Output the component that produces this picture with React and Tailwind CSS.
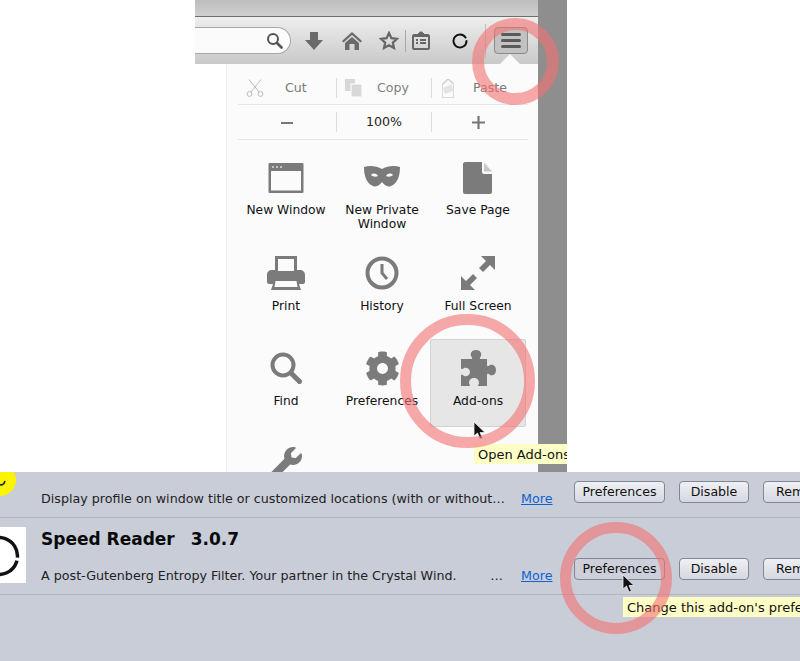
import React from "react";
import { FaCog, FaWrench } from "react-icons/fa";

const G = "#7b7b7b";

const IconWindow = () => (
  <svg width="36" height="32" viewBox="0 0 36 32"><rect x="0.5" y="1" width="35" height="30" rx="1" fill={G} /><rect x="3" y="9" width="30" height="19.5" fill="#fbfbfb" /><circle cx="5" cy="5" r="1" fill="#ddd" /><circle cx="9" cy="5" r="1" fill="#ddd" /><circle cx="13" cy="5" r="1" fill="#ddd" /></svg>
);
const IconMask = () => (
  <svg width="36" height="32" viewBox="0 0 36 32"><path fillRule="evenodd" fill={G} d="M0 5C6 3 13 4 18 7C23 4 30 3 36 5C36 13 34 21 27 24C23 26 20 22 18 20C16 22 13 26 9 24C2 21 0 13 0 5ZM7 13C9 15 12 15 14 14C12 11 9 11 7 13ZM22 14C24 15 27 15 29 13C27 11 24 11 22 14Z" /></svg>
);
const IconPage = () => (
  <svg width="30" height="34" viewBox="0 0 30 34"><path fill={G} d="M2 1H19V11C19 12 20 13 21 13H29V31C29 32 28 33 27 33H2C1 33 0 32 0 31V3C0 2 1 1 2 1Z" /><path fill={G} opacity="0.4" d="M21 1.5L29 10.5H21Z" /></svg>
);
const IconPrinter = () => (
  <svg width="38" height="34" viewBox="0 0 38 34"><path fillRule="evenodd" fill={G} d="M8 0H30V14H33C36 14 38 16 38 19V26C38 27 37 28 36 28H32L34 34H4L6 28H2C1 28 0 27 0 26V19C0 16 2 14 5 14H8ZM11 3V15H27V3ZM8.5 25L7.5 31H30.5L29.5 25Z" /></svg>
);
const IconClock = () => (
  <svg width="34" height="34" viewBox="0 0 34 34"><circle cx="17" cy="17" r="14.5" fill="none" stroke={G} strokeWidth="4" /><path d="M17 8V17L22 23" fill="none" stroke={G} strokeWidth="3" /></svg>
);
const IconArrows = () => (
  <svg width="34" height="34" viewBox="0 0 34 34"><path fill={G} d="M20 0H34V14L29 9L22 16L18 12L25 5ZM0 34V20L5 25L12 18L16 22L9 29L14 34Z" /></svg>
);
const IconSearch = () => (
  <svg width="32" height="32" viewBox="0 0 32 32"><circle cx="13" cy="13" r="10.5" fill="none" stroke={G} strokeWidth="4" /><path d="M21 21L29.5 29.5" stroke={G} strokeWidth="5" strokeLinecap="round" /></svg>
);
const IconPuzzle = () => (
  <svg width="36" height="36" viewBox="0 0 36 36"><path fill={G} d="M1 9H11C13 9 12 7 11 6C10 3 12 0 16 0C20 0 22 3 21 6C20 7 19 9 21 9H27V15C27 17 29 16 30 15C32 14 36 15 36 20C36 25 32 26 30 25C29 24 27 23 27 25V36H19C17 36 19 34 19 33C19 30 17 28 14 28C11 28 9 30 9 33C9 34 11 36 9 36H1V26C1 24 3 25 4 26C7 27 10 25 10 22C10 19 7 17 4 18C3 19 1 20 1 18Z" /></svg>
);

const Cursor = ({ className }) => (
  <svg className={className} width="14" height="20" viewBox="0 0 14 20"><path d="M1 1V15L4.5 12L7 18L9.5 17L7 11.5H12Z" fill="#111" stroke="#eee" strokeWidth="0.8" /></svg>
);

const items = [
  { label: ["New Window"], icon: <IconWindow /> },
  { label: ["New Private", "Window"], icon: <IconMask /> },
  { label: ["Save Page"], icon: <IconPage /> },
  { label: ["Print"], icon: <IconPrinter /> },
  { label: ["History"], icon: <IconClock /> },
  { label: ["Full Screen"], icon: <IconArrows /> },
  { label: ["Find"], icon: <IconSearch /> },
  { label: ["Preferences"], icon: <FaCog size={35} color={G} /> },
  { label: ["Add-ons"], icon: <IconPuzzle />, hover: true },
  { label: [""], icon: <FaWrench size={32} color={G} /> },
];

function Toolbar() {
  return (
    <div className="flex h-[47px] shrink-0 items-center bg-gradient-to-b from-[#eeeeee] to-[#c9c9c9]">
      <div className="flex h-[27px] w-[96px] items-center justify-end rounded-r-[14px] border border-l-0 border-[#a8a8a8] bg-[#fbfbfb] pr-[7px]">
        <svg width="17" height="17" viewBox="0 0 17 17"><circle cx="7" cy="7" r="5" fill="none" stroke="#555" strokeWidth="2" /><path d="M11 11L15.5 15.5" stroke="#555" strokeWidth="2.6" strokeLinecap="round" /></svg>
      </div>
      <svg className="ml-[14px]" width="18" height="18" viewBox="0 0 18 18"><path fill="#6a6a6a" d="M5 0H13V8H18L9 18L0 8H5Z" /></svg>
      <svg className="ml-[19px]" width="20" height="18" viewBox="0 0 20 18"><path fill="#6a6a6a" d="M10 0L20 9L18.5 10.5L10 3L1.5 10.5L0 9ZM3 11L10 5L17 11V18H12.5V12H7.5V18H3Z" /></svg>
      <svg className="ml-[17px]" width="20" height="19" viewBox="0 0 20 19"><path fill="none" stroke="#666" strokeWidth="2.2" d="M10 2L12.4 7.2L18 7.8L13.8 11.6L15 17L10 14.2L5 17L6.2 11.6L2 7.8L7.6 7.2Z" /></svg>
      <div className="ml-[6px] h-[22px] w-px bg-[#a9a9a9]" />
      <svg className="ml-[6px]" width="18" height="19" viewBox="0 0 18 19"><path fill="#666" fillRule="evenodd" d="M6 2H7C7 0 11 0 11 2H12V3H16C17 3 18 4 18 5V17C18 18 17 19 16 19H2C1 19 0 18 0 17V5C0 4 1 3 2 3H6ZM2 6V17H16V6ZM4 8H6V10H4ZM8 8H14V10H8ZM4 11H6V13H4ZM8 11H14V13H8Z" /></svg>
      <svg className="ml-[22px]" width="16" height="16" viewBox="0 0 16 16"><path fill="none" stroke="#111" strokeWidth="2" strokeLinecap="round" d="M13.5 4.5A6.5 6.5 0 1 0 14.5 8" /></svg>
      <div className="ml-[17px] h-[34px] w-px bg-[#bdbdbd]" />
      <div className="relative ml-[8px] flex h-[27px] w-[34px] flex-col items-center justify-center gap-[3px] rounded-[4px] border border-[#8a8a8a] bg-[#c2c2c2]">
        <span className="h-[3px] w-[20px] rounded-full bg-[#5a5a5a]" />
        <span className="h-[3px] w-[20px] rounded-full bg-[#5a5a5a]" />
        <span className="h-[3px] w-[20px] rounded-full bg-[#5a5a5a]" />
      </div>
    </div>
  );
}

function EditRows() {
  const Sep = () => <div className="h-[20px] w-px bg-[#dcdcdc]" />;
  return (
    <div className="mr-[10px]">
      <div className="flex h-[41px] items-center border-b border-[#e6e6e6] pt-[8px] text-[12.6px] text-[#7a7a7a]">
        <div className="flex w-[98px] items-center pl-[8px]">
          <svg width="18" height="18" viewBox="0 0 18 18"><path fill="none" stroke="#bbb" strokeWidth="1" d="M3 0.5L13 13M15 0.5L5 13" /><circle cx="3.5" cy="15" r="2.4" fill="none" stroke="#bbb" /><circle cx="14.5" cy="15" r="2.4" fill="none" stroke="#bbb" /></svg>
          <span className="ml-[21px]">Cut</span>
        </div>
        <Sep />
        <div className="flex w-[94px] items-center pl-[8px]">
          <svg width="17" height="18" viewBox="0 0 17 18"><rect x="0" y="0" width="10" height="12" fill="#d8d8d8" /><rect x="6" y="5" width="11" height="13" fill="#d8d8d8" stroke="#fff" /></svg>
          <span className="ml-[15px] text-[#808080]">Copy</span>
        </div>
        <Sep />
        <div className="flex items-center pl-[10px]">
          <svg width="12" height="19" viewBox="0 0 12 19"><path d="M0 6L6 0L12 5V19H0Z" fill="none" stroke="#d0d0d0" strokeWidth="1.5" /><path d="M1 9L10 5L11 12L3 15Z" fill="#e4e4e4" /></svg>
          <span className="ml-[19px]">Paste</span>
        </div>
      </div>
      <div className="flex h-[35px] items-center border-b border-[#e6e6e6] text-[12.6px] text-[#222]">
        <div className="flex w-[98px] justify-center"><span className="mt-[1px] h-[2px] w-[12px] bg-[#777]" /></div>
        <Sep />
        <div className="w-[94px] text-center">100%</div>
        <Sep />
        <div className="flex flex-1 justify-center pr-[3px]">
          <svg width="13" height="13" viewBox="0 0 13 13"><path d="M6.5 0V13M0 6.5H13" stroke="#777" strokeWidth="2.2" /></svg>
        </div>
      </div>
    </div>
  );
}

function MenuGrid() {
  return (
    <div className="mt-[9px] grid w-[288px] grid-cols-[96px_96px_96px] gap-y-[7px]">
      {items.map((it, i) => (
        <div
          key={i}
          className={`flex h-[88px] flex-col items-center border pt-[10px] text-[12.3px] leading-[14px] text-[#111] ${
            it.hover ? "rounded-[2px] border-[#d2d2d2] bg-[#e6e6e6]" : "border-transparent"
          }`}
        >
          <div className={`flex h-[36px] items-center justify-center ${i >= 3 ? "mb-[8px]" : "mb-[7px]"}`}>{it.icon}</div>
          {it.label.map((l) => (
            <div key={l}>{l}</div>
          ))}
        </div>
      ))}
    </div>
  );
}

function AddonButtons({ hovered }) {
  const cls =
    "flex h-[22px] shrink-0 items-center justify-center rounded-[4px] border border-[#7f8696] pt-[1px] text-[12.6px] text-[#111]";
  const face = "bg-gradient-to-b from-[#eff0f4] to-[#d5d8e0]";
  return (
    <>
      <div className={`${cls} w-[91px] ${hovered ? "bg-[#cdd0da]" : face}`}>Preferences</div>
      <div className={`${cls} ml-[14px] w-[70px] ${face}`}>Disable</div>
      <div className={`${cls} ml-[14px] w-[70px] justify-start ${face} pl-[12px]`}>Remove</div>
    </>
  );
}

export default function App() {
  return (
    <div
      className="relative h-[661px] w-[800px] overflow-hidden bg-white"
      style={{ fontFamily: '"DejaVu Sans", "Liberation Sans", sans-serif' }}
    >
      <div className="flex h-[472px] overflow-hidden pl-[195px]">
        <div className="flex w-[343px] flex-col">
          <div className="h-[17px] shrink-0 border-b border-[#6f6f6f] bg-gradient-to-b from-[#bdbdbd] to-[#d0d0d0]" />
          <Toolbar />
          <div className="flex min-h-0 flex-1 pl-[31px]">
            <div className="relative flex-1 rounded-tr-[4px] border-l border-[#efefef] bg-[#fbfbfb] pl-[11px]">
              <div className="absolute -top-[7px] left-[276px] h-[14px] w-[14px] rotate-45 bg-[#fbfbfb]" />
              <EditRows />
              <MenuGrid />
            </div>
          </div>
        </div>
        <div className="w-[29px] bg-[#8e8e8e]" />
      </div>

      <div className="h-[189px] overflow-hidden bg-[#c9cdd8] text-[12.7px]">
        <div className="relative flex h-[46px] items-start border-b border-[#b3b2be] pl-[41px] pt-[9px]">
          <div className="absolute -top-[8px] -left-[16px] h-[32px] w-[32px] rounded-full bg-[#fbf400]">
            <svg className="absolute left-[14px] top-[14px]" width="10" height="10" viewBox="0 0 10 10"><path d="M2 6.5C4 7.5 6 6.5 7 3" fill="none" stroke="#222" strokeWidth="1.6" /></svg>
          </div>
          <div className="w-[480px] shrink-0 whitespace-nowrap pt-[8px] text-[#222]">
            Display profile on window title or customized locations (with or without…
          </div>
          <a className="mt-[8px] w-[53px] shrink-0 text-[#1060d0] underline">More</a>
          <AddonButtons />
        </div>
        <div className="relative flex h-[77px] border-b border-[#b3b2be] pl-[41px]">
          <div className="absolute left-0 top-[9px] h-[56px] w-[26px] overflow-hidden bg-white">
            <svg width="26" height="56" viewBox="0 0 26 56"><circle cx="-1" cy="29" r="18.5" fill="none" stroke="#111" strokeWidth="3.5" strokeDasharray="24 3 40 0" transform="rotate(-70 -1 29)" /></svg>
          </div>
          <div className="w-[480px] shrink-0">
            <div className="mt-[9px] flex text-[17px] leading-[24px] font-bold text-[#0a0a0a]">
              <span>Speed Reader</span>
              <span className="ml-[16px]">3.0.7</span>
            </div>
            <div className="mt-[15px] flex w-[462px] justify-between whitespace-nowrap text-[#222]">
              <span>A post-Gutenberg Entropy Filter. Your partner in the Crystal Wind.</span>
              <span>…</span>
            </div>
          </div>
          <a className="mt-[48px] w-[53px] shrink-0 text-[#1060d0] underline">More</a>
          <div className="mt-[40px] flex">
            <AddonButtons hovered />
          </div>
        </div>
      </div>

      <div className="absolute left-[474px] top-[444px] h-[20px] w-[93px] overflow-hidden whitespace-nowrap bg-[#fdfdc6] pl-[4px] pt-[1px] text-[13px] leading-[20px] text-[#111]">
        Open Add-ons
      </div>
      <div className="absolute left-[623px] top-[597px] h-[20px] w-[177px] overflow-hidden whitespace-nowrap bg-[#fdfdc6] pl-[4px] pt-[1px] text-[13px] leading-[20px] text-[#111]">
        Change this add-on's preferences
      </div>
      <Cursor className="absolute left-[473px] top-[421px]" />
      <Cursor className="absolute left-[622px] top-[574px]" />

      <div className="absolute left-[472px] top-[18px] h-[87px] w-[87px] rounded-full border-[12px] border-[#f47272]/60" />
      <div className="absolute left-[400px] top-[314px] h-[134px] w-[135px] rounded-full border-[11px] border-[#f47272]/60" />
      <div className="absolute left-[560px] top-[522px] h-[112px] w-[112px] rounded-full border-[11px] border-[#f47272]/60" />
    </div>
  );
}
